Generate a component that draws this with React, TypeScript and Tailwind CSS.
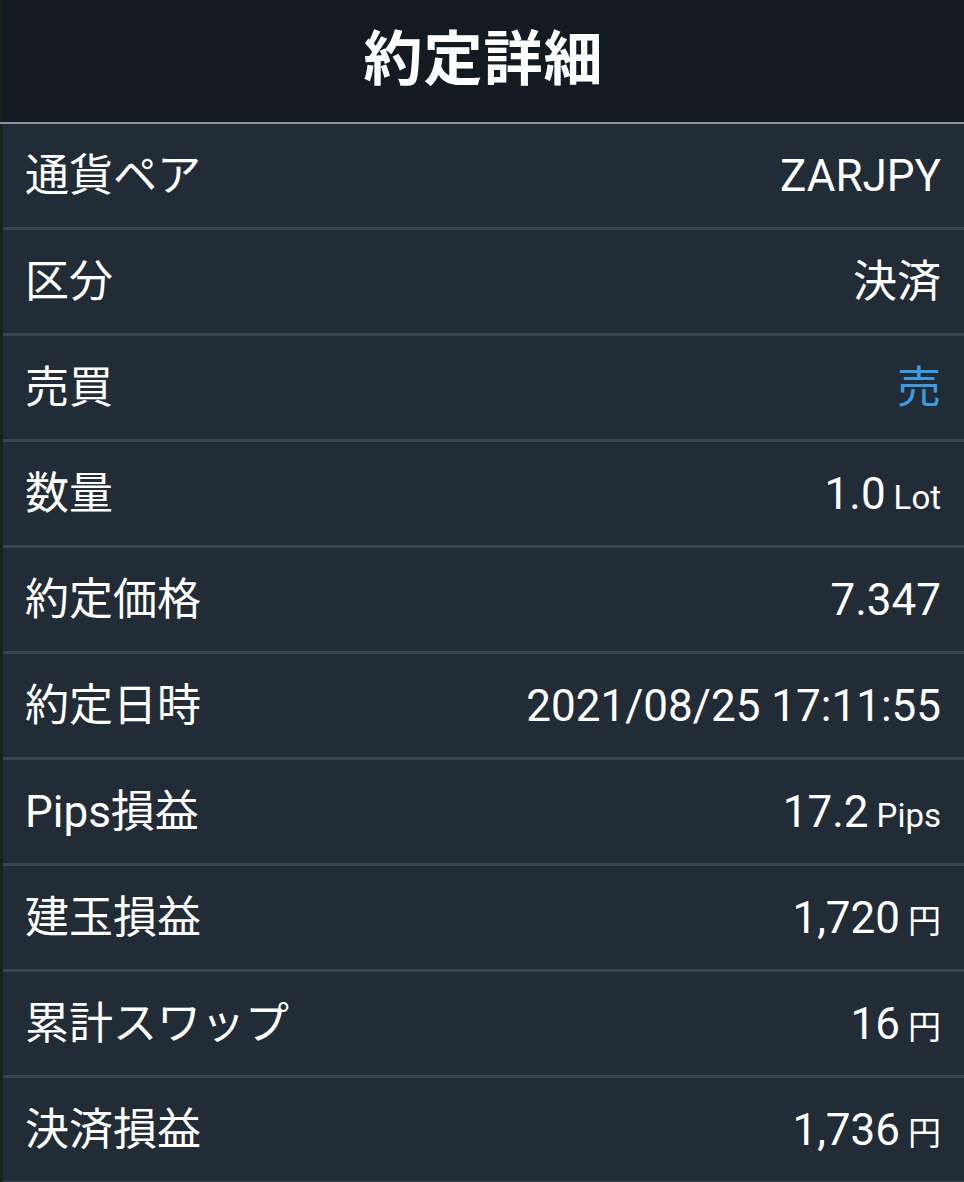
import React from 'react';

type Row = {
  label: string;
  value: string;
  unit?: string;
  blue?: boolean;
};

const rows: Row[] = [
  { label: '通貨ペア', value: 'ZARJPY' },
  { label: '区分', value: '決済' },
  { label: '売買', value: '売', blue: true },
  { label: '数量', value: '1.0', unit: 'Lot' },
  { label: '約定価格', value: '7.347' },
  { label: '約定日時', value: '2021/08/25 17:11:55' },
  { label: 'Pips損益', value: '17.2', unit: 'Pips' },
  { label: '建玉損益', value: '1,720', unit: '円' },
  { label: '累計スワップ', value: '16', unit: '円' },
  { label: '決済損益', value: '1,736', unit: '円' },
];

const font = { fontFamily: 'Roboto, "Noto Sans CJK JP", sans-serif' };

export default function App() {
  return (
    <div className="w-[964px] h-[1182px] overflow-hidden bg-[#222c37] text-white" style={font}>
      {/* Title bar */}
      <div className="h-[122px] bg-[#141a22] border-l-[3px] border-[#17211c] flex items-center justify-center pb-[4px]">
        <h1 className="text-[59px] font-bold leading-none tracking-[1px]">約定詳細</h1>
      </div>
      <div className="h-[2px] bg-[#8b939b]" />

      {/* Detail rows */}
      <div className="border-l-[3px] border-[#18221e]">
        {rows.map((row) => (
          <div
            key={row.label}
            className="h-[106px] border-b-[3px] border-[#3a4550] flex items-center justify-between pl-[22px] pr-[23px]"
          >
            <span className="text-[44px] leading-none">{row.label}</span>
            <span className="flex items-baseline gap-[8px] leading-none">
              <span className={`text-[44px] ${row.blue ? 'text-[#3c9be0]' : 'text-white'}`}>{row.value}</span>
              {row.unit && <span className="text-[33px]">{row.unit}</span>}
            </span>
          </div>
        ))}
      </div>
    </div>
  );
}
